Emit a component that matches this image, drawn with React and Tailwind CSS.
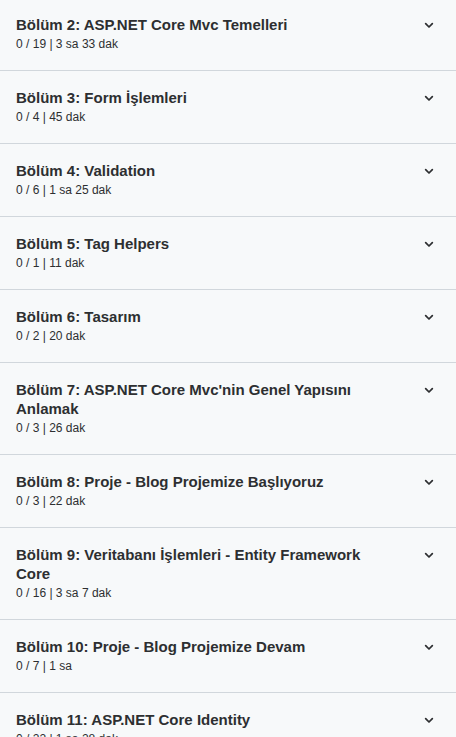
const sections = [
  { title: 'Bölüm 2: ASP.NET Core Mvc Temelleri', done: 0, total: 19, time: '3 sa 33 dak' },
  { title: 'Bölüm 3: Form İşlemleri', done: 0, total: 4, time: '45 dak' },
  { title: 'Bölüm 4: Validation', done: 0, total: 6, time: '1 sa 25 dak' },
  { title: 'Bölüm 5: Tag Helpers', done: 0, total: 1, time: '11 dak' },
  { title: 'Bölüm 6: Tasarım', done: 0, total: 2, time: '20 dak' },
  { title: "Bölüm 7: ASP.NET Core Mvc'nin Genel Yapısını Anlamak", done: 0, total: 3, time: '26 dak' },
  { title: 'Bölüm 8: Proje - Blog Projemize Başlıyoruz', done: 0, total: 3, time: '22 dak' },
  { title: 'Bölüm 9: Veritabanı İşlemleri - Entity Framework Core', done: 0, total: 16, time: '3 sa 7 dak' },
  { title: 'Bölüm 10: Proje - Blog Projemize Devam', done: 0, total: 7, time: '1 sa' },
  { title: 'Bölüm 11: ASP.NET Core Identity', done: 0, total: 22, time: '1 sa 28 dak' },
];

function Chevron() {
  return (
    <svg width="16" height="16" viewBox="0 0 24 24" fill="none" stroke="#2d2f31" strokeWidth="2.6" strokeLinecap="round" strokeLinejoin="round">
      <path d="M7 10l5 5 5-5" />
    </svg>
  );
}

export default function App() {
  return (
    <div className="w-[456px] h-[737px] overflow-hidden bg-[#f7f9fa] text-[#2d2f31]" style={{ fontFamily: '"Liberation Sans", Arial, sans-serif' }}>
      <div className="mt-[-2px]">
        {sections.map((s) => (
          <div key={s.title} className="flex items-start justify-between border-b border-[#d1d7dc] pl-4 pr-4 pt-[17px] pb-[18px]">
            <div className="flex-1 pr-6">
              <div className="text-[15px] leading-[19px] font-bold">{s.title}</div>
              <div className="mt-[2px] text-[12px] leading-[16px] text-[#2d2f31]">
                {s.done} / {s.total} | {s.time}
              </div>
            </div>
            <div className="pt-[2px] pr-[3px]">
              <Chevron />
            </div>
          </div>
        ))}
      </div>
    </div>
  );
}
